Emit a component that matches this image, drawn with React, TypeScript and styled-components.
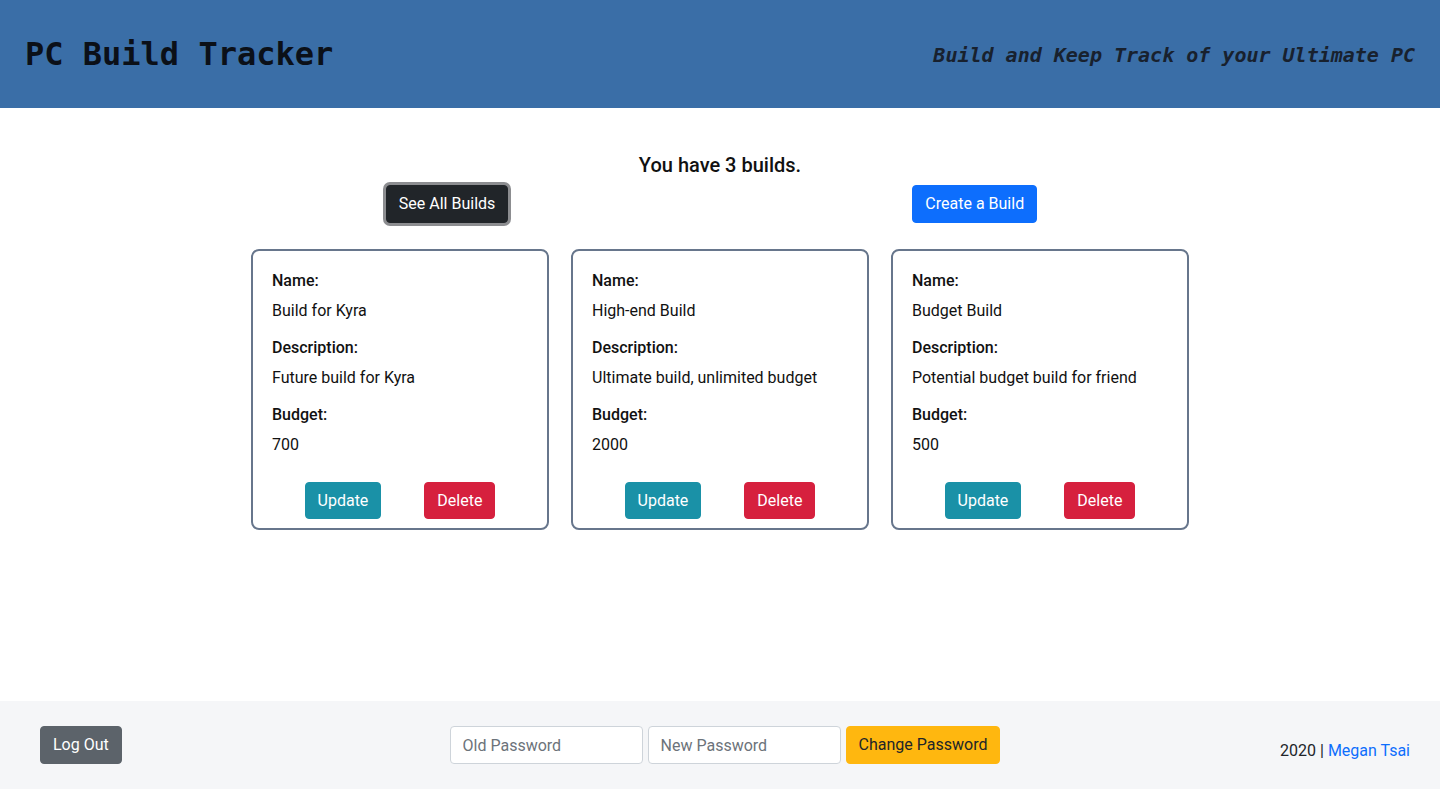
import styled, { createGlobalStyle } from 'styled-components';

const GlobalStyle = createGlobalStyle`
  * {
    box-sizing: border-box;
  }

  body {
    margin: 0;
    font-family: Roboto, 'Noto Sans', sans-serif;
    font-size: 16px;
    line-height: 1.5;
    color: #212529;
    background: #fff;
  }
`;

interface Build {
  name: string;
  description: string;
  budget: number;
}

const builds: Build[] = [
  { name: 'Build for Kyra', description: 'Future build for Kyra', budget: 700 },
  { name: 'High-end Build', description: 'Ultimate build, unlimited budget', budget: 2000 },
  { name: 'Budget Build', description: 'Potential budget build for friend', budget: 500 },
];

const Page = styled.div`
  display: flex;
  flex-direction: column;
  min-height: 789px;
`;

const Header = styled.header`
  display: flex;
  align-items: center;
  justify-content: space-between;
  height: 108px;
  padding: 0 25px;
  background-color: #3a6ea7;
  font-family: 'DejaVu Sans Mono', 'Liberation Mono', monospace;
`;

const Title = styled.h1`
  margin: 0;
  font-size: 32px;
  font-weight: 700;
  color: #0b1018;
`;

const Tagline = styled.p`
  margin: 2px 0 0;
  font-size: 20px;
  font-weight: 700;
  font-style: italic;
  color: #18212e;
`;

const Main = styled.main`
  flex: 1;
  display: flex;
  flex-direction: column;
  align-items: center;
  padding-top: 43px;
`;

const Count = styled.h2`
  margin: 0;
  font-size: 20px;
  font-weight: 500;
  line-height: 28px;
  color: #111;
`;

const Toolbar = styled.div`
  display: flex;
  justify-content: center;
  gap: 404px;
  padding-right: 17px;
  margin-top: 6px;
`;

const Button = styled.button<{ $bg: string; $fg?: string; $ring?: boolean }>`
  font-family: inherit;
  font-size: 16px;
  line-height: 24px;
  padding: 6px 12px;
  height: 38px;
  border: 1px solid ${({ $bg }) => $bg};
  border-radius: 4px;
  background-color: ${({ $bg }) => $bg};
  color: ${({ $fg }) => $fg ?? '#fff'};
  cursor: pointer;
  box-shadow: ${({ $ring }) => ($ring ? '0 0 0 3px #8c8d90' : 'none')};
`;

const Cards = styled.div`
  display: flex;
  gap: 22px;
  margin-top: 26px;
`;

const Card = styled.div`
  width: 298px;
  height: 281px;
  border: 2px solid #67768c;
  border-radius: 8px;
  padding: 18px 19px 9px;
  display: flex;
  flex-direction: column;
`;

const Field = styled.div`
  margin-bottom: 13px;
`;

const Label = styled.div`
  font-weight: 500;
  line-height: 24px;
  color: #111;
`;

const Value = styled.div`
  margin-top: 6px;
  line-height: 24px;
  color: #111;
`;

const Actions = styled.div`
  display: flex;
  justify-content: center;
  gap: 43px;
  margin-top: auto;
`;

const CardButton = styled(Button)`
  height: 37px;
  padding: 5px 12px;
`;

const Footer = styled.footer`
  display: grid;
  grid-template-columns: 1fr auto 1fr;
  align-items: center;
  height: 88px;
  padding: 0 30px 0 40px;
  background-color: #f5f6f8;
`;

const FooterLeft = styled.div`
  display: flex;
`;

const PasswordForm = styled.form`
  display: flex;
  gap: 5px;
`;

const Input = styled.input`
  width: 193px;
  height: 38px;
  padding: 6px 12px;
  font-family: inherit;
  font-size: 16px;
  color: #212529;
  background: #fff;
  border: 1px solid #ced4da;
  border-radius: 4px;

  &::placeholder {
    color: #6c737a;
  }
`;

const Credit = styled.div`
  justify-self: end;
  margin-top: 12px;
  color: #212529;
`;

const Link = styled.a`
  color: #0d6efd;
  text-decoration: none;
`;

export default function App() {
  return (
    <>
      <GlobalStyle />
      <Page>
        <Header>
          <Title>PC Build Tracker</Title>
          <Tagline>Build and Keep Track of your Ultimate PC</Tagline>
        </Header>
        <Main>
          <Count>You have {builds.length} builds.</Count>
          <Toolbar>
            <Button $bg="#212529" $ring>
              See All Builds
            </Button>
            <Button $bg="#0d6efd">Create a Build</Button>
          </Toolbar>
          <Cards>
            {builds.map((build) => (
              <Card key={build.name}>
                <Field>
                  <Label>Name:</Label>
                  <Value>{build.name}</Value>
                </Field>
                <Field>
                  <Label>Description:</Label>
                  <Value>{build.description}</Value>
                </Field>
                <Field>
                  <Label>Budget:</Label>
                  <Value>{build.budget}</Value>
                </Field>
                <Actions>
                  <CardButton $bg="#1a91a7">Update</CardButton>
                  <CardButton $bg="#d6203e">Delete</CardButton>
                </Actions>
              </Card>
            ))}
          </Cards>
        </Main>
        <Footer>
          <FooterLeft>
            <Button $bg="#5c636a">Log Out</Button>
          </FooterLeft>
          <PasswordForm onSubmit={(e) => e.preventDefault()}>
            <Input type="password" placeholder="Old Password" />
            <Input type="password" placeholder="New Password" />
            <Button $bg="#ffb70f" $fg="#212529" type="submit">
              Change Password
            </Button>
          </PasswordForm>
          <Credit>
            2020 | <Link href="#">Megan Tsai</Link>
          </Credit>
        </Footer>
      </Page>
    </>
  );
}
